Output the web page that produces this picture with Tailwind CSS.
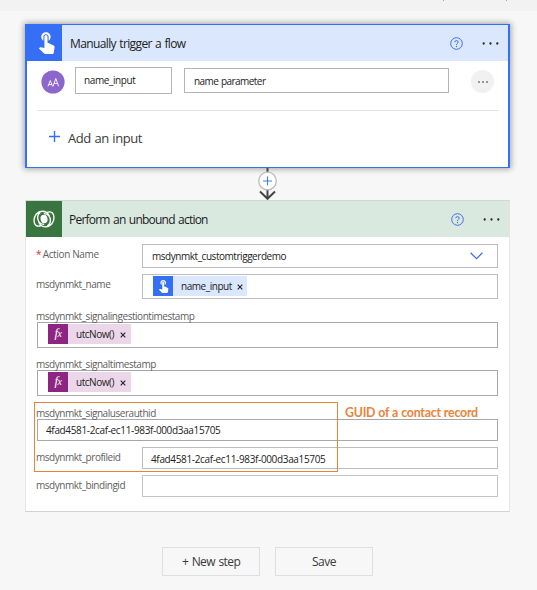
<!DOCTYPE html>
<html lang="en">
<head>
<meta charset="utf-8">
<title>Flow designer</title>
<script src="https://cdn.jsdelivr.net/npm/@tailwindcss/browser@4"></script>
</head>
<body class="w-[537px] h-[590px] overflow-hidden bg-[#f7f7f7] font-['Open_Sans','Noto_Sans',sans-serif] text-[10px] text-[#222]">
<svg class="hidden">
  <symbol id="tap" viewBox="0 0 24 24"><path fill="currentColor" d="M9 11.24V7.5C9 6.12 10.12 5 11.5 5S14 6.12 14 7.5v3.74c1.21-.81 2-2.18 2-3.74C16 5.01 13.99 3 11.5 3S7 5.01 7 7.5c0 1.56.79 2.93 2 3.74zm9.84 4.63l-4.54-2.26c-.17-.07-.35-.11-.54-.11H13v-6c0-.83-.67-1.5-1.5-1.5S10 6.67 10 7.5v10.74l-3.43-.72c-.08-.01-.15-.03-.24-.03-.31 0-.59.13-.79.33l-.79.8 4.94 4.94c.27.27.65.44 1.06.44h6.79c.75 0 1.33-.55 1.44-1.28l.75-5.27c.01-.07.02-.14.02-.2 0-.62-.38-1.16-.91-1.38z"/></symbol>
  <symbol id="help" viewBox="0 0 13 13"><g fill="none" stroke="#4270e8"><circle cx="6.5" cy="6.5" r="5.8" stroke-width="1"/><path d="M4.8 5.2Q4.8 3.6 6.5 3.6T8.2 5.1Q8.2 5.9 7.3 6.4T6.5 7.9" stroke-width="1"/></g><circle cx="6.5" cy="9.5" r=".65" fill="#4270e8"/></symbol>
  <symbol id="dots" viewBox="0 0 17 3"><g fill="#252525"><circle cx="1.7" cy="1.5" r="1.15"/><circle cx="8.5" cy="1.5" r="1.15"/><circle cx="15.3" cy="1.5" r="1.15"/></g></symbol>
  <symbol id="close" viewBox="0 0 6 6"><path d="M.7.7l4.6 4.6M5.3.7L.7 5.3" stroke="#222" stroke-width="1.1"/></symbol>
</svg>

<div class="h-[11px] bg-[#f2f2f2] flex justify-end"><div class="w-px h-px bg-[#aaa] mr-[62px]"></div><div class="w-px h-px bg-[#aaa] mr-[30px]"></div></div>

<main class="pt-[13px] pl-[25px]">
  <section class="w-[485px] h-[144px] bg-white border-x-2 border-y border-[#356ff5] shadow-[0_0_6px_1px_rgba(0,0,0,0.35)]">
    <header class="h-[36px] flex items-center bg-[#dae7fd]">
      <div class="w-[35px] h-[36px] bg-[#356ff5] text-white pl-[7px] pt-[4px]"><svg class="w-[25px] h-[25px]"><use href="#tap"/></svg></div>
      <h2 class="ml-[8px] pt-[2px] text-[12px] tracking-[-0.62px] [word-spacing:0.8px] flex-1 whitespace-nowrap">Manually trigger a flow</h2>
      <svg class="w-[13px] h-[13px] mr-[19px]"><use href="#help"/></svg>
      <svg class="w-[17px] h-[3px] mr-[9px]"><use href="#dots"/></svg>
    </header>
    <div class="h-[50px] ml-[10px] mr-[9px] pt-[5px] flex border-b border-[#e4e4e4]">
      <svg class="w-[24px] h-[24px] ml-[4px] mt-[4px]" viewBox="0 0 24 24"><circle cx="12" cy="12" r="11.6" fill="#8c66cc"/><g fill="none" stroke="#fff" stroke-width=".9"><path d="M7 16.3L9.3 10.6 11.6 16.3M7.8 14.5H10.8M12 16.3L14.8 8.5 17.6 16.3M13 13.4H16.6"/></g></svg>
      <div class="w-[97px] h-[27px] ml-[10px] mt-px border border-[#b5b5b5] pl-[8px] leading-[24px] tracking-[-0.4px]"><span>name_input</span></div>
      <div class="w-[265px] h-[25px] ml-[12px] mt-[2px] border border-[#b5b5b5] pl-[9px] leading-[24px] tracking-[-0.55px] [word-spacing:0.5px]"><span>name parameter</span></div>
      <div class="w-[23px] h-[23px] ml-[22px] mt-[4px] rounded-full bg-[#f1f1f1] flex items-center justify-center gap-[2px]"><i class="w-[2px] h-[2px] rounded-full bg-[#777]"></i><i class="w-[2px] h-[2px] rounded-full bg-[#777]"></i><i class="w-[2px] h-[2px] rounded-full bg-[#777]"></i></div>
    </div>
    <div class="h-[53px] flex items-center pl-[22px] text-[#3a3a3a]">
      <svg class="w-[11px] h-[11px] -mt-[2px]" viewBox="0 0 11 11"><path d="M5.5 0v11M0 5.5h11" stroke="#356ff5" stroke-width="1.4"/></svg>
      <span class="ml-[8px] mt-[2px] text-[13px] tracking-[-0.4px] [word-spacing:0.5px]">Add an input</span>
    </div>
  </section>

  <div class="w-[485px] h-[32px] flex justify-center relative z-10">
    <svg class="w-[21px] h-[32px]" viewBox="0 0 21 32"><path d="M10.5 0v31M3 23.5l7.5 7.3 7.5-7.3" fill="none" stroke="#444" stroke-width="2"/><circle cx="10.5" cy="13" r="8.8" fill="#fff" stroke="#bdbdbd" stroke-width="1.3"/><path d="M10.5 8.5v9M6 13h9" stroke="#3b86dc" stroke-width="1.1"/></svg>
  </div>

  <section class="w-[485px] h-[312px] bg-white border border-t-[#d0d9d3] border-x-[#e5e5e5] border-b-[#d2d2d2] text-[#606060]">
    <header class="h-[36px] flex items-center bg-[#dae9e0] text-[#1c1c1c]">
      <div class="w-[36px] h-[36px] bg-[#39753f] flex items-center justify-center"><svg class="w-[22px] h-[18px]" viewBox="0 0 22 18"><g fill="none" stroke="#fff" stroke-width="1.35" stroke-linecap="round"><path d="M8 15.6C4 17.2 1 15 1 10.7 1 5.6 4.6 1.2 9.2 1.2c3.4 0 5.8 2 6.8 4.4M7.4 2.2C5.4 3.6 4.6 5.4 4.6 7.6c0 3.8 2.6 6.6 6 6.8"/><path d="M14 2.4C18 .8 21 3 21 7.3c0 5.1-3.6 9.5-8.2 9.5-3.4 0-5.8-2-6.8-4.4M14.6 15.8c2-1.4 2.8-3.2 2.8-5.4 0-3.8-2.6-6.6-6-6.8"/></g><path d="M11.6 4.8c-2.6-.6-4.1 1-4.1 3.4 0 2.6 1 4.6 3 5 2.6.5 4.1-1 4.1-3.4 0-2.6-1-4.6-3-5z" fill="#fff"/></svg></div>
      <h2 class="ml-[7px] pt-[2px] text-[12px] tracking-[-0.78px] [word-spacing:1px] flex-1 whitespace-nowrap">Perform an unbound action</h2>
      <svg class="w-[13px] h-[13px] mr-[19px]"><use href="#help"/></svg>
      <svg class="w-[17px] h-[3px] mr-[9px]"><use href="#dots"/></svg>
    </header>
    <div class="pl-[11px] pr-[11px] pt-[7px] relative tracking-[-0.46px]">
      <div class="flex">
        <label class="-ml-px w-[106px] leading-[21px] tracking-[-0.35px]"><span class="text-[#d13438]">*</span><span class="ml-[1.5px]">Action Name</span></label>
        <div class="w-[356px] h-[24px] border border-[#bdbdbd] pl-[9px] pr-[14px] flex items-center justify-between text-[#222]"><span class="pt-px">msdynmkt_customtriggerdemo</span><svg class="w-[13px] h-[8px]" viewBox="0 0 13 8"><path d="M.6.8l5.9 5.9L12.4.8" fill="none" stroke="#4270e8" stroke-width="1.3"/></svg></div>
      </div>
      <div class="flex mt-[6px]">
        <label class="-ml-px w-[106px] leading-[21px]"><span>msdynmkt_name</span></label>
        <div class="w-[356px] h-[25px] border border-[#bdbdbd] pl-[10px] pt-px text-[#222]">
          <div class="w-[94px] h-[20px] bg-[#dae7fd] flex items-center"><div class="w-[20px] h-[20px] bg-[#356ff5] text-white pl-[3px] pt-[2px]"><svg class="w-[15px] h-[15px]"><use href="#tap"/></svg></div><span class="ml-[8px] w-[51px] shrink-0">name_input</span><svg class="w-[6px] h-[6px] ml-[5px] mt-[2px]"><use href="#close"/></svg></div>
        </div>
      </div>
      <label class="block h-[15px] -ml-px mt-[8px] leading-[18px]"><span>msdynmkt_signalingestiontimestamp</span></label>
      <div class="h-[26px] w-[461px] border border-[#a8a8a8] pl-[10px] pt-px text-[#222]">
        <div class="w-[83px] h-[20px] bg-[#ecd7ea] flex items-center"><div class="w-[20px] h-[20px] bg-[#8d2683] text-white text-center italic font-['Liberation_Serif',serif] text-[13px] leading-[18px]">f<span class="text-[10px]">x</span></div><span class="ml-[8px] w-[39px]">utcNow()</span><svg class="w-[6px] h-[6px] ml-[5px] mt-[2px]"><use href="#close"/></svg></div>
      </div>
      <label class="block h-[15px] -ml-px mt-[7px] leading-[18px]"><span>msdynmkt_signaltimestamp</span></label>
      <div class="h-[26px] w-[461px] border border-[#a8a8a8] pl-[10px] pt-px text-[#222]">
        <div class="w-[83px] h-[20px] bg-[#ecd7ea] flex items-center"><div class="w-[20px] h-[20px] bg-[#8d2683] text-white text-center italic font-['Liberation_Serif',serif] text-[13px] leading-[18px]">f<span class="text-[10px]">x</span></div><span class="ml-[8px] w-[39px]">utcNow()</span><svg class="w-[6px] h-[6px] ml-[5px] mt-[2px]"><use href="#close"/></svg></div>
      </div>
      <div class="h-[15px] -ml-px mt-[8px] leading-[18px] flex"><label class="w-[309px]"><span>msdynmkt_signaluserauthid</span></label><b class="font-['Lato','Open_Sans',sans-serif] font-bold text-[12.4px] leading-[18px] tracking-[-0.25px] [word-spacing:0.3px] text-[#e6843a] whitespace-nowrap"><span>GUID of a contact record</span></b></div>
      <div class="h-[22px] w-[461px] border border-[#a8a8a8] pl-[8px] leading-[21px] tracking-[-0.35px] text-[#222]"><span>4fad4581-2caf-ec11-983f-000d3aa15705</span></div>
      <div class="flex mt-[6px]"><label class="-ml-px w-[106px] leading-[21px]"><span>msdynmkt_profileid</span></label><div class="h-[22px] w-[356px] border border-[#bdbdbd] pl-[8px] leading-[22px] tracking-[-0.35px] text-[#222]"><span>4fad4581-2caf-ec11-983f-000d3aa15705</span></div></div>
      <div class="flex mt-[6px]"><label class="-ml-px w-[106px] leading-[21px]"><span>msdynmkt_bindingid</span></label><div class="h-[22px] w-[356px] border border-[#c4c4c4]"></div></div>
      <div class="absolute left-[8px] top-[165px] w-[304px] h-[70px] border border-[#e6843a]"></div>
    </div>
  </section>

  <div class="flex mt-[35px] ml-[137px] gap-[15px] text-[12px] text-[#3a3a3a]">
    <button class="w-[98px] h-[29px] pt-px border border-[#dfdfdf] tracking-[-0.6px] [word-spacing:1px]"><span>+ New step</span></button>
    <button class="w-[98px] h-[29px] pt-px border border-[#dfdfdf] tracking-[-0.5px]"><span>Save</span></button>
  </div>
</main>
</body>
</html>
